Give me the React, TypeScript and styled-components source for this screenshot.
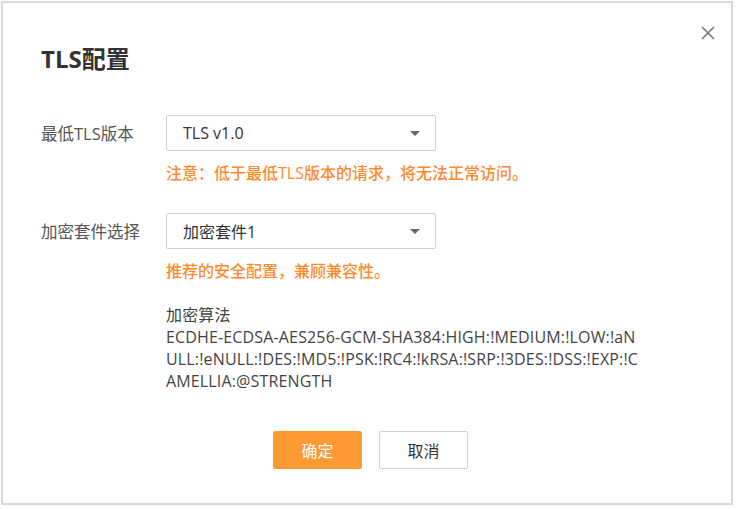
import React from "react";
import styled, { createGlobalStyle } from "styled-components";

const GlobalStyle = createGlobalStyle`
  * {
    box-sizing: border-box;
  }
  body {
    margin: 0;
    background: #fff;
    font-family: "Open Sans", "Noto Sans CJK SC", sans-serif;
  }
`;

const App = (): JSX.Element => {
  return (
    <>
      <GlobalStyle />
      <Dialog>
        <CloseButton aria-label="close">
          <svg width="14" height="14" viewBox="0 0 14 14">
            <path d="M1 1L13 13M13 1L1 13" stroke="#777" strokeWidth="1.6" fill="none" />
          </svg>
        </CloseButton>
        <Title>TLS配置</Title>

        <FormRow>
          <Label>最低TLS版本</Label>
          <Field>
            <Select>
              <span>TLS v1.0</span>
              <Caret />
            </Select>
            <Hint>注意：低于最低TLS版本的请求，将无法正常访问。</Hint>
          </Field>
        </FormRow>

        <FormRow>
          <Label>加密套件选择</Label>
          <Field>
            <Select>
              <span>加密套件1</span>
              <Caret />
            </Select>
            <Hint>推荐的安全配置，兼顾兼容性。</Hint>
          </Field>
        </FormRow>

        <Cipher>
          <div>加密算法</div>
          <CipherText>
            ECDHE-ECDSA-AES256-GCM-SHA384:HIGH:!MEDIUM:!LOW:!aNULL:!eNULL:!DES:!MD5:!PSK:!RC4:!kRSA:!SRP:!3DES:!DSS:!EXP:!CAMELLIA:@STRENGTH
          </CipherText>
        </Cipher>

        <Footer>
          <Button $primary>确定</Button>
          <Button>取消</Button>
        </Footer>
      </Dialog>
    </>
  );
};

const Dialog = styled.div`
  position: relative;
  width: 732px;
  height: 504px;
  margin: 1px;
  border: 2px solid #d8d8d8;
  padding: 42px 0 0 38px;
`;

const CloseButton = styled.button`
  position: absolute;
  top: 23px;
  right: 16px;
  display: flex;
  padding: 0;
  border: 0;
  background: none;
  cursor: pointer;
`;

const Title = styled.h2`
  margin: 0 0 42px;
  font-size: 24px;
  line-height: 28px;
  font-weight: 700;
  color: #333;
`;

const FormRow = styled.div`
  display: grid;
  grid-template-columns: 125px 1fr;
  margin-bottom: 29px;
`;

const Label = styled.div`
  height: 36px;
  display: flex;
  align-items: center;
  font-size: 16.5px;
  color: #555;
`;

const Field = styled.div`
  display: flex;
  flex-direction: column;
`;

const Select = styled.div`
  width: 270px;
  height: 36px;
  display: flex;
  align-items: center;
  justify-content: space-between;
  padding: 0 15px 0 16px;
  border: 1px solid #cfcfcf;
  border-radius: 2px;
  font-size: 16px;
  color: #333;
`;

const Caret = styled.span`
  width: 0;
  height: 0;
  border-left: 5px solid transparent;
  border-right: 5px solid transparent;
  border-top: 5px solid #666;
`;

const Hint = styled.div`
  margin-top: 11px;
  font-size: 16px;
  line-height: 22px;
  font-weight: 500;
  color: #ff8a2e;
`;

const Cipher = styled.div`
  margin: -7px 0 0 125px;
  width: 474px;
  font-size: 16px;
  line-height: 22px;
  letter-spacing: 0.15px;
  color: #444;
`;

const CipherText = styled.div`
  word-break: break-all;
`;

const Footer = styled.div`
  display: flex;
  justify-content: center;
  gap: 17px;
  margin: 39px 0 0 -31px;
`;

const Button = styled.button<{ $primary?: boolean }>`
  width: 89px;
  height: 38px;
  border-radius: 2px;
  border: 1px solid ${(p) => (p.$primary ? "#ff9933" : "#cfcfcf")};
  background: ${(p) => (p.$primary ? "#ff9933" : "#fff")};
  color: ${(p) => (p.$primary ? "#fff" : "#333")};
  font-family: inherit;
  font-size: 16px;
  cursor: pointer;
`;

export default App;
